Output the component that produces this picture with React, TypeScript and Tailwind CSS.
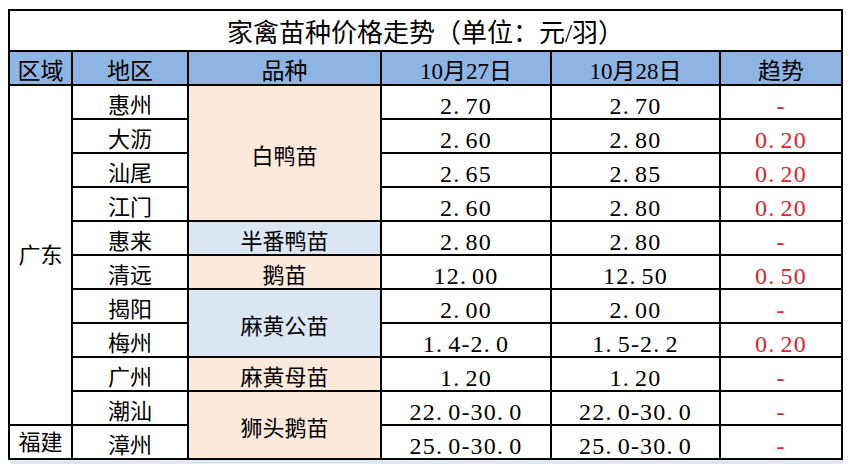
import React from "react";

type Row = {
  area?: { label: string; span: string };
  city: string;
  kind?: { label: string; span: string; bg: string };
  d27: string;
  d28: string;
  trend: string;
};

const rows: Row[] = [
  { area: { label: "广东", span: "row-span-10" }, city: "惠州", kind: { label: "白鸭苗", span: "row-span-4", bg: "bg-[#fde9d9]" }, d27: "2.70", d28: "2.70", trend: "-" },
  { city: "大沥", d27: "2.60", d28: "2.80", trend: "0.20" },
  { city: "汕尾", d27: "2.65", d28: "2.85", trend: "0.20" },
  { city: "江门", d27: "2.60", d28: "2.80", trend: "0.20" },
  { city: "惠来", kind: { label: "半番鸭苗", span: "row-span-1", bg: "bg-[#dce6f1]" }, d27: "2.80", d28: "2.80", trend: "-" },
  { city: "清远", kind: { label: "鹅苗", span: "row-span-1", bg: "bg-[#fde9d9]" }, d27: "12.00", d28: "12.50", trend: "0.50" },
  { city: "揭阳", kind: { label: "麻黄公苗", span: "row-span-2", bg: "bg-[#dce6f1]" }, d27: "2.00", d28: "2.00", trend: "-" },
  { city: "梅州", d27: "1.4-2.0", d28: "1.5-2.2", trend: "0.20" },
  { city: "广州", kind: { label: "麻黄母苗", span: "row-span-1", bg: "bg-[#fde9d9]" }, d27: "1.20", d28: "1.20", trend: "-" },
  { city: "潮汕", kind: { label: "狮头鹅苗", span: "row-span-2", bg: "bg-[#fde9d9]" }, d27: "22.0-30.0", d28: "22.0-30.0", trend: "-" },
  { area: { label: "福建", span: "row-span-1" }, city: "漳州", d27: "25.0-30.0", d28: "25.0-30.0", trend: "-" },
];

const headers = ["区域", "地区", "品种", "10月27日", "10月28日", "趋势"];

const cell = "flex items-center justify-center bg-white";
const cjk = "text-[22px] pt-[8px]";
const num = "text-[24px] tracking-[1.2px] pt-[8px]";

// SimSun-style figures: the full stop takes a wider cell than in Times
function Num({ value }: { value: string }) {
  return (
    <>
      {value.split("").map((ch, i) =>
        ch === "." ? (
          <span key={i} className="pr-[5px]">
            .
          </span>
        ) : (
          <span key={i}>{ch}</span>
        )
      )}
    </>
  );
}

export default function App() {
  return (
    <div
      className="h-[464px] w-[854px] overflow-hidden bg-white text-black"
      style={{ fontFamily: '"Liberation Serif", "Noto Sans CJK SC", serif' }}
    >
      <div className="pl-[8px] pt-[9px]">
        <div className="grid w-[835px] grid-cols-[61px_114px_191px_168px_167px_120px] grid-rows-[39px_32px_repeat(11,32px)] gap-[2px] bg-black p-[2px] leading-none">
          <div className={`${cell} col-span-6 pt-[7px] text-[26px]`}>家禽苗种价格走势（单位：元/羽）</div>

          {headers.map((h) => (
            <div key={h} className="flex items-center justify-center bg-[#8db4e2] pt-[7px] text-[23px]">
              {h}
            </div>
          ))}

          {rows.map((r) => (
            <React.Fragment key={r.city}>
              {r.area && (
                <div className={`${cell} ${r.area.span} pt-[2px] text-[22px]`}>{r.area.label}</div>
              )}
              <div className={`${cell} ${cjk}`}>{r.city}</div>
              {r.kind && (
                <div className={`flex items-center justify-center ${r.kind.bg} ${r.kind.span} ${cjk}`}>
                  {r.kind.label}
                </div>
              )}
              <div className={`${cell} ${num}`}>
                <Num value={r.d27} />
              </div>
              <div className={`${cell} ${num}`}>
                <Num value={r.d28} />
              </div>
              <div className={`${cell} ${num} text-[#e3222a]`}>
                <Num value={r.trend} />
              </div>
            </React.Fragment>
          ))}
        </div>
        <div className="ml-[2px] h-[8px] w-[833px] bg-[#e2e7ef]" />
      </div>
    </div>
  );
}
